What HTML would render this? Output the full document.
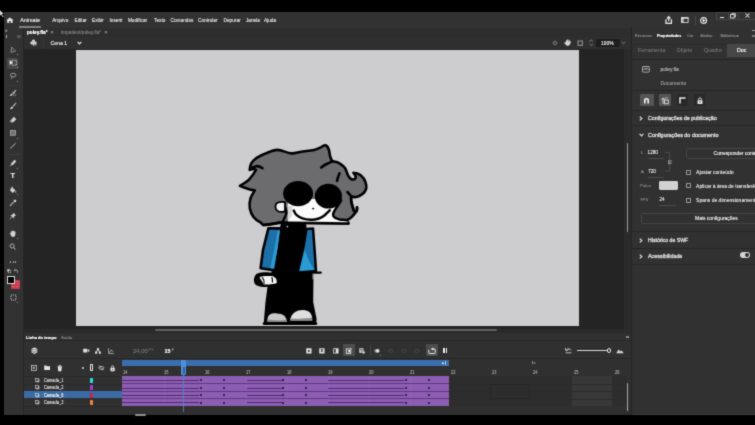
<!DOCTYPE html>
<html><head><meta charset="utf-8"><title>Animate</title>
<style>
html,body{margin:0;padding:0;background:#000;}
body{width:755px;height:425px;position:relative;overflow:hidden;font-family:"Liberation Sans",sans-serif;color:#d0d0d0;}
.a{position:absolute;}
.t{position:absolute;white-space:nowrap;line-height:10px;text-shadow:0 0 .4px currentColor;}
svg{overflow:visible;}
</style></head><body><svg width="0" height="0" style="position:absolute"><defs><filter id="sf" x="0" y="0" width="100%" height="100%" color-interpolation-filters="sRGB"><feConvolveMatrix order="3" kernelMatrix="1 5 1 5 25 5 1 5 1" divisor="49" edgeMode="duplicate" preserveAlpha="true"/></filter></defs></svg><div id="root" style="position:absolute;left:-10px;top:-10px;width:775px;height:445px;will-change:transform;filter:url(#sf);background:#000"><div style="position:absolute;left:10px;top:10px;width:755px;height:425px">
<div class="a" style="left:3.7px;top:12.3px;width:765px;height:403px;background:#323232;"></div>
<div class="a" style="left:3.7px;top:28px;width:628.3px;height:9px;background:#2d2d2d;"></div>
<div class="a" style="left:23px;top:28px;width:35px;height:9px;background:#2f2f2f;"></div>
<div class="a" style="left:23px;top:37px;width:609px;height:12px;background:#2f2f2f;"></div>
<div class="a" style="left:23px;top:49px;width:609px;height:284px;background:#242424;"></div>
<div class="a" style="left:624px;top:49px;width:8px;height:284px;background:#2b2b2b;"></div>
<div class="a" style="left:76px;top:50px;width:503px;height:276px;background:#cdcccf;"></div>
<div class="a" style="left:3.7px;top:28px;width:18.8px;height:387px;background:#323232;"></div>
<div class="a" style="left:22.5px;top:28px;width:1px;height:387px;background:#262626;"></div>
<div class="a" style="left:23px;top:328.8px;width:601px;height:4.2px;background:#2a2a2a;"></div>
<div class="a" style="left:155px;top:328.9px;width:342px;height:1.9px;background:#626262;border-radius:1px;"></div>
<div class="a" style="left:23.5px;top:332.8px;width:608.5px;height:82.2px;background:#303030;"></div>
<div class="a" style="left:23.5px;top:340px;width:608.5px;height:0.8px;background:#262626;"></div>
<div class="a" style="left:632px;top:27px;width:135px;height:388px;background:#313131;"></div>
<div class="a" style="left:631px;top:27px;width:1px;height:388px;background:#242424;"></div>
<svg class="a" style="left:5.9px;top:16.9px;" width="7.8" height="6.2" viewBox="0 0 9 8.6" preserveAspectRatio="none"><path d="M4.5 0.6 L0.3 4.4 H1.4 V8.2 H3.6 V5.6 H5.4 V8.2 H7.6 V4.4 H8.7 Z" fill="#e6e6e6"/></svg>
<svg class="a" style="left:0px;top:9px;" width="6" height="9" viewBox="0 0 6 9" preserveAspectRatio="none"><path d="M-1.6 0 L4.3 4.9 L1.9 5.1 L3.9 7.8 L2.7 8.4 L1 5.8 L-1.6 7.6 Z" fill="#dcdcdc" stroke="#000" stroke-width=".4"/></svg>
<div class="t" style="left:20.2px;top:15px;font-size:5.4px;color:#e0e0e0;">Animate</div>
<div class="a" style="left:19px;top:26.2px;width:21.5px;height:1.6px;background:#808080;"></div>
<div class="t" style="left:52.2px;top:16px;font-size:4.75px;color:#d6d6d6;">Arquivo</div>
<div class="t" style="left:74.5px;top:16px;font-size:4.75px;color:#d6d6d6;">Editar</div>
<div class="t" style="left:92px;top:16px;font-size:4.75px;color:#d6d6d6;">Exibir</div>
<div class="t" style="left:109.5px;top:16px;font-size:4.75px;color:#d6d6d6;">Inserir</div>
<div class="t" style="left:127.9px;top:16px;font-size:4.75px;color:#d6d6d6;">Modificar</div>
<div class="t" style="left:154px;top:16px;font-size:4.75px;color:#d6d6d6;">Texto</div>
<div class="t" style="left:170.5px;top:16px;font-size:4.75px;color:#d6d6d6;">Comandos</div>
<div class="t" style="left:198px;top:16px;font-size:4.75px;color:#d6d6d6;">Controlar</div>
<div class="t" style="left:223.5px;top:16px;font-size:4.75px;color:#d6d6d6;">Depurar</div>
<div class="t" style="left:245.9px;top:16px;font-size:4.75px;color:#d6d6d6;">Janela</div>
<div class="t" style="left:264px;top:16px;font-size:4.75px;color:#d6d6d6;">Ajuda</div>
<svg class="a" style="left:665.3px;top:15.8px;" width="7.4" height="8.4" viewBox="0 0 9 10" preserveAspectRatio="none"><path d="M1.2 3.8 V8.8 H7.8 V3.8" fill="none" stroke="#e8e8e8" stroke-width="1.6"/><path d="M4.5 6.2 V1 M2.4 3 L4.5 0.9 L6.6 3" fill="none" stroke="#e8e8e8" stroke-width="1.5"/></svg>
<svg class="a" style="left:680.6px;top:17.4px;" width="7.6" height="5.9" viewBox="0 0 8 7" preserveAspectRatio="none"><rect x="0.5" y="0.5" width="7" height="6" fill="none" stroke="#ddd" stroke-width="1"/><rect x="0.5" y="0.5" width="7" height="1.6" fill="#ddd"/><rect x="0.5" y="0.5" width="2.6" height="6" fill="#ddd" opacity=".7"/></svg>
<div class="a" style="left:694.5px;top:15.5px;width:0.8px;height:9px;background:#484848;"></div>
<svg class="a" style="left:700.2px;top:16.7px;" width="7.2" height="7.2" viewBox="0 0 8 8" preserveAspectRatio="none"><circle cx="4" cy="4" r="3.3" fill="#2c2c2c" stroke="#f4f4f4" stroke-width="1.2"/><path d="M2.9 2 L6.3 4 L2.9 6 Z" fill="#fff"/></svg>
<div class="a" style="left:716px;top:11.5px;width:40px;height:8px;border:0.8px solid #464646;box-sizing:border-box;background:#323232"></div>
<div class="a" style="left:728px;top:12px;width:0.8px;height:7.5px;background:#464646;"></div>
<div class="a" style="left:737.7px;top:12px;width:0.8px;height:7.5px;background:#464646;"></div>
<div class="a" style="left:719.8px;top:16.7px;width:4.2px;height:1.3px;background:#e8e8e8;"></div>
<svg class="a" style="left:730px;top:13.2px;" width="6" height="6" viewBox="0 0 6 6" preserveAspectRatio="none"><rect x="0.6" y="1.6" width="3.6" height="3.4" fill="none" stroke="#ddd" stroke-width=".9"/><path d="M1.8 1.6 V0.6 H5.4 V4 H4.2" fill="none" stroke="#ddd" stroke-width=".9"/></svg>
<svg class="a" style="left:745px;top:13.3px;" width="5" height="5" viewBox="0 0 5 5" preserveAspectRatio="none"><path d="M0.5 0.5 L4.5 4.5 M4.5 0.5 L0.5 4.5" stroke="#ddd" stroke-width="1.05"/></svg>
<div class="t" style="left:27px;top:28px;font-size:4.7px;color:#f4f4f4;font-weight:bold;">poley.fla*</div>
<div class="t" style="left:50.3px;top:27px;font-size:6px;color:#8a8a8a;">×</div>
<div class="t" style="left:61px;top:28px;font-size:4.8px;color:#787878;">impatient/poley.fla*</div>
<div class="t" style="left:104.2px;top:27px;font-size:6px;color:#8a8a8a;">×</div>
<div class="t" style="left:5px;top:26px;font-size:4.5px;color:#999;">«</div>
<div class="a" style="left:6.2px;top:34.6px;width:1px;height:3px;background:#aaa;"></div>
<div class="a" style="left:16.5px;top:34.6px;width:4.2px;height:3.4px;background:#555;"></div>
<svg class="a" style="left:29.6px;top:39.2px;" width="7" height="7" viewBox="0 0 8 8" preserveAspectRatio="none"><circle cx="4" cy="2.2" r="1.7" fill="#d8d8d8"/><circle cx="2" cy="4.6" r="1.7" fill="#d8d8d8"/><circle cx="6" cy="4.6" r="1.7" fill="#d8d8d8"/><path d="M4 3 L5.2 7.3 H2.8 Z" fill="#d8d8d8"/><circle cx="6.6" cy="6.8" r=".7" fill="#d8d8d8"/></svg>
<div class="a" style="left:42.8px;top:38.5px;width:0.6px;height:9.5px;background:#383838;"></div>
<div class="t" style="left:50.6px;top:38px;font-size:5.1px;color:#e0e0e0;">Cena 1</div>
<svg class="a" style="left:77.3px;top:41.2px;" width="5" height="4" viewBox="0 0 5 4" preserveAspectRatio="none"><path d="M0.6 0.8 L2.5 2.8 L4.4 0.8" fill="none" stroke="#e8e8e8" stroke-width="1.2"/></svg>
<svg class="a" style="left:551.8px;top:39.6px;" width="6" height="6" viewBox="0 0 6 6" preserveAspectRatio="none"><path d="M3 0.3 L5.7 3 L3 5.7 L0.3 3 Z" fill="#777"/><circle cx="3" cy="3" r="1" fill="#303030"/></svg>
<svg class="a" style="left:564px;top:39.4px;" width="7.4" height="7" viewBox="0 0 8 8" preserveAspectRatio="none"><path d="M2.6 7.4 C1.6 6.4 .6 5 .4 4.2 C.2 3.4 1.2 3.2 1.8 4 L2.2 4.6 L2 1.6 C2 .8 3 .8 3.1 1.6 L3.3 3.4 L3.5 .9 C3.6 .1 4.6 .2 4.6 1 L4.6 3.4 L5.2 1.2 C5.4 .5 6.3 .8 6.2 1.5 L5.9 3.8 L6.7 2.6 C7.1 2 7.8 2.4 7.5 3.1 C7 4.4 6.8 5.6 6.2 6.6 C5.8 7.2 5.4 7.4 5 7.6 Z" fill="#d8d8d8"/></svg>
<svg class="a" style="left:577px;top:39.6px;" width="6.4" height="6.4" viewBox="0 0 6.4 6.4" preserveAspectRatio="none"><rect x="0.4" y="0.4" width="5.6" height="5.6" fill="#858585"/><rect x="1.7" y="1.7" width="3" height="3" fill="#2a2a2a"/></svg>
<svg class="a" style="left:589.2px;top:39.2px;" width="4.4" height="7.4" viewBox="0 0 4.4 7.4" preserveAspectRatio="none"><path d="M0.5 2.5 L2.2 0.8 L3.9 2.5 M0.5 4.9 L2.2 6.6 L3.9 4.9" fill="none" stroke="#888" stroke-width=".9"/></svg>
<div class="a" style="left:595.6px;top:39.3px;width:24.3px;height:7.4px;background:#1e1e1e;border-radius:1px;"></div>
<div class="t" style="left:601px;top:39px;font-size:4.9px;color:#e4e4e4;">100%</div>
<svg class="a" style="left:621.2px;top:41.2px;" width="5" height="4" viewBox="0 0 5 4" preserveAspectRatio="none"><path d="M0.7 0.8 L2.5 2.6 L4.3 0.8" fill="none" stroke="#8a8a8a" stroke-width=".9"/></svg>
<svg class="a" style="left:9.085px;top:45.885px;" width="7.83" height="7.83" viewBox="0 0 9 9" preserveAspectRatio="none"><path d="M2.9 1.2 L2.4 7.4 L7.4 5.8 Z" fill="none" stroke="#9c9c9c" stroke-width="1"/></svg>
<div class="a" style="left:17.4px;top:54px;width:1px;height:1px;background:#999;"></div>
<div class="a" style="left:7.2px;top:57.7px;width:11.2px;height:11.5px;background:#484848;border-radius:1px;"></div>
<svg class="a" style="left:8.65px;top:59.385px;" width="8.7" height="7.83" viewBox="0 0 10 9" preserveAspectRatio="none"><rect x="3.4" y="1.6" width="5.4" height="5.4" fill="none" stroke="#d2d2d2" stroke-width=".9" stroke-dasharray="1.2 .7"/><path d="M0.8 1.4 L0.8 6.8 L4.6 4.1 Z" fill="#f4f4f4"/></svg>
<div class="a" style="left:17.4px;top:67.4px;width:1px;height:1px;background:#999;"></div>
<svg class="a" style="left:9.085px;top:72.485px;" width="7.83" height="7.83" viewBox="0 0 9 9" preserveAspectRatio="none"><ellipse cx="4.8" cy="3.6" rx="3.1" ry="2.1" fill="none" stroke="#a8a8a8" stroke-width="1"/><path d="M3.2 5.2 C2.6 6 3.4 6.6 2.6 7.8" fill="none" stroke="#a8a8a8" stroke-width="1"/></svg>
<div class="a" style="left:17.4px;top:80.9px;width:1px;height:1px;background:#999;"></div>
<div class="a" style="left:6.5px;top:84.5px;width:13px;height:0.7px;background:#3c3c3c;"></div>
<svg class="a" style="left:9.085px;top:89.285px;" width="7.83" height="7.83" viewBox="0 0 9 9" preserveAspectRatio="none"><path d="M7.8 0.8 L3.6 5 L4.6 6 L8.4 1.6 Z" fill="#d2d2d2"/><path d="M3.2 5.4 C1.6 5.6 1.8 7.4 0.6 7.8 C2.4 8.4 4.2 7.8 4.2 6.4 Z" fill="#d2d2d2"/><circle cx="6.4" cy="6.6" r="1.4" fill="none" stroke="#999" stroke-width=".7"/></svg>
<svg class="a" style="left:9.085px;top:102.485px;" width="7.83" height="7.83" viewBox="0 0 9 9" preserveAspectRatio="none"><path d="M8 0.6 L4 4.8 L4.9 5.7 L8.5 1.3 Z" fill="#d2d2d2"/><path d="M3.6 5.2 C2 5.4 2.4 7.2 1 8 C2.8 8.6 4.6 7.6 4.6 6.2 Z" fill="#d2d2d2"/></svg>
<svg class="a" style="left:9.085px;top:115.68499999999999px;" width="7.83" height="7.83" viewBox="0 0 9 9" preserveAspectRatio="none"><path d="M5.6 1 L8.4 3.8 L4.6 7.6 H2.6 L1 6 Z" fill="#d2d2d2"/><path d="M1.8 5.2 L3.8 7.2" stroke="#323232" stroke-width=".7"/></svg>
<svg class="a" style="left:9.085px;top:129.285px;" width="7.83" height="7.83" viewBox="0 0 9 9" preserveAspectRatio="none"><rect x="1.6" y="1.6" width="5.8" height="5.6" fill="#727272" stroke="#b4b4b4" stroke-width=".8"/></svg>
<div class="a" style="left:17.1px;top:138px;width:1px;height:1px;background:#888;"></div>
<svg class="a" style="left:9.085px;top:142.485px;" width="7.83" height="7.83" viewBox="0 0 9 9" preserveAspectRatio="none"><path d="M1.4 7.4 L7.6 1.6" stroke="#d2d2d2" stroke-width="1"/></svg>
<div class="a" style="left:6.5px;top:154px;width:13px;height:0.7px;background:#3c3c3c;"></div>
<svg class="a" style="left:9.085px;top:159.38500000000002px;" width="7.83" height="7.83" viewBox="0 0 9 9" preserveAspectRatio="none"><path d="M6.6 0.8 L8.4 2.6 L5 6.6 L2 7.6 L2.8 4.6 Z" fill="#d2d2d2"/><path d="M1 8.2 L2.6 6.8" stroke="#d2d2d2" stroke-width=".8"/></svg>
<div class="a" style="left:17.1px;top:167.6px;width:1px;height:1px;background:#888;"></div>
<div class="t" style="left:10.5px;top:171px;font-size:7.4px;color:#dcdcdc;font-weight:bold;">T</div>
<svg class="a" style="left:9.085px;top:185.88500000000002px;" width="7.83" height="7.83" viewBox="0 0 9 9" preserveAspectRatio="none"><path d="M3.6 1.4 L7.4 4.8 L4.4 8 L1 5 Z" fill="#d2d2d2"/><path d="M2 2.6 L4.6 0.8" stroke="#d2d2d2" stroke-width=".8"/><path d="M7.8 5.4 C8.6 6.6 8.6 7.6 7.8 7.8 C7 7.6 7 6.6 7.8 5.4Z" fill="#d2d2d2"/></svg>
<div class="a" style="left:17.1px;top:194.2px;width:1px;height:1px;background:#888;"></div>
<svg class="a" style="left:9.085px;top:199.285px;" width="7.83" height="7.83" viewBox="0 0 9 9" preserveAspectRatio="none"><path d="M6.4 0.8 C7.4 0.2 8.8 1.6 8.2 2.6 L6.8 4 L5 2.2 Z" fill="#d2d2d2"/><path d="M5.2 3 L1.6 6.6 L1.2 7.8 L2.4 7.4 L6 3.8" fill="none" stroke="#d2d2d2" stroke-width=".8"/></svg>
<svg class="a" style="left:9.085px;top:212.485px;" width="7.83" height="7.83" viewBox="0 0 9 9" preserveAspectRatio="none"><path d="M5 0.8 L8.2 4 L6.8 4.4 L5.6 5.8 L5.4 7.4 L1.6 3.6 L3.2 3.4 L4.6 2.2 Z" fill="#d2d2d2"/><path d="M3.2 5.8 L0.8 8.2" stroke="#d2d2d2" stroke-width=".8"/></svg>
<svg class="a" style="left:9.4px;top:229.6px;" width="7.4" height="7.4" viewBox="0 0 9 9" preserveAspectRatio="none"><path d="M1.4 4.6 C0.8 3 2 2.4 2.8 3.4 L2.8 1.6 C2.8 .6 4 .6 4 1.6 C4 .2 5.4 .2 5.4 1.6 C5.6 .6 6.8 .8 6.8 2 C7.2 1.4 8.2 1.8 8 2.8 L7.6 6 C7.4 7.8 6.4 8.4 4.8 8.4 C3.2 8.4 2.2 7 1.4 4.6Z" fill="#d2d2d2"/></svg>
<div class="a" style="left:17.1px;top:238px;width:1px;height:1px;background:#888;"></div>
<svg class="a" style="left:9.4px;top:243px;" width="7.4" height="7.4" viewBox="0 0 9 9" preserveAspectRatio="none"><circle cx="3.8" cy="3.6" r="2.5" fill="none" stroke="#d2d2d2" stroke-width=".9"/><path d="M5.6 5.6 L8 8" stroke="#d2d2d2" stroke-width="1.1"/></svg>
<div class="a" style="left:10.2px;top:261.4px;width:1.2px;height:1.2px;background:#bbb;border-radius:1px;"></div>
<div class="a" style="left:12.6px;top:261.4px;width:1.2px;height:1.2px;background:#bbb;border-radius:1px;"></div>
<div class="a" style="left:15.0px;top:261.4px;width:1.2px;height:1.2px;background:#bbb;border-radius:1px;"></div>
<svg class="a" style="left:7px;top:269.4px;" width="4.2" height="4.2" viewBox="0 0 5 5" preserveAspectRatio="none"><rect x=".4" y=".4" width="2.8" height="2.8" fill="#ddd"/><rect x="1.8" y="1.8" width="2.8" height="2.8" fill="#222" stroke="#ddd" stroke-width=".5"/></svg>
<svg class="a" style="left:14.4px;top:269.4px;" width="4.2" height="4.2" viewBox="0 0 5 5" preserveAspectRatio="none"><path d="M.6 1.4 H3 C4 1.4 4.2 2.4 4.2 4.4" fill="none" stroke="#ddd" stroke-width=".8"/><path d="M1.6 .2 L.4 1.4 L1.6 2.6" fill="none" stroke="#ddd" stroke-width=".7"/></svg>
<div class="a" style="left:11px;top:280.4px;width:8.5px;height:8.5px;background:#c63a4c;"></div>
<svg class="a" style="left:11px;top:280.4px;" width="8.5" height="8.5" viewBox="0 0 8.5 8.5" preserveAspectRatio="none"><rect x="1.6" y="1.6" width="5.3" height="5.3" fill="none" stroke="#e8909a" stroke-width=".7" stroke-dasharray=".8 .8"/></svg>
<div class="a" style="left:7px;top:276px;width:8px;height:8.2px;background:#000;border:0.9px solid #d8d8d8;box-sizing:border-box"></div>
<svg class="a" style="left:9.6px;top:294px;" width="7" height="7" viewBox="0 0 7 7" preserveAspectRatio="none"><rect x="1" y="1" width="5" height="5" fill="none" stroke="#ccc" stroke-width=".9" stroke-dasharray="1.1 .9"/></svg>
<div class="a" style="left:17.1px;top:302px;width:1px;height:1px;background:#888;"></div>
<div class="t" style="left:26px;top:333px;font-size:4.1px;color:#f4f4f4;font-weight:bold;">Linha do tempo</div>
<div class="t" style="left:61px;top:333px;font-size:4.3px;color:#808080;">Saída</div>
<div class="a" style="left:625.5px;top:335.6px;width:3.4px;height:2.6px;background:#8a8a8a;"></div>
<svg class="a" style="left:31.4px;top:347px;" width="6.8" height="7.6" viewBox="0 0 8 9" preserveAspectRatio="none"><path d="M4 .6 L7.4 2 L4 3.4 L.6 2 Z" fill="#e6e6e6"/><path d="M.6 2.4 V6.6 L4 8.2 L7.4 6.6 V2.4 L4 3.9Z" fill="#e6e6e6"/><path d="M.6 4 L4 5.5 L7.4 4 M.6 5.4 L4 6.9 L7.4 5.4" fill="none" stroke="#303030" stroke-width=".5"/></svg>
<svg class="a" style="left:83px;top:348px;" width="6.6" height="5.2" viewBox="0 0 8 6" preserveAspectRatio="none"><rect x=".2" y=".8" width="5" height="4.4" rx=".6" fill="#dedede"/><path d="M5.2 3 L7.6 1.2 V4.8 Z" fill="#dedede"/></svg>
<svg class="a" style="left:95.2px;top:347.6px;" width="6" height="6" viewBox="0 0 8 7.5" preserveAspectRatio="none"><rect x="2.6" y=".2" width="2.8" height="2.6" fill="#dedede"/><rect x=".1" y="4.6" width="2.8" height="2.6" fill="#dedede"/><rect x="5.1" y="4.6" width="2.8" height="2.6" fill="#dedede"/><path d="M3.9 2.4 V3.7 M1.4 4.8 V3.7 H6.4 V4.8" fill="none" stroke="#dedede" stroke-width=".9"/></svg>
<svg class="a" style="left:108px;top:347.6px;" width="6.2" height="6" viewBox="0 0 8 7.5" preserveAspectRatio="none"><path d="M.8 .4 V6.8 H7.4" fill="none" stroke="#e6e6e6" stroke-width=".8"/><path d="M2 5.4 C3 5 3.6 2.4 4.6 2.8 C5.4 3.2 5.6 4.4 6.8 4.2" fill="none" stroke="#e6e6e6" stroke-width=".9"/></svg>
<div class="t" style="left:133px;top:346px;font-size:5.9px;color:#6e6e6e;">24,00</div>
<div class="t" style="left:148.4px;top:346px;font-size:2.6px;color:#5c5c5c;">FPS</div>
<div class="t" style="left:164.6px;top:346px;font-size:5.4px;color:#f0f0f0;font-weight:bold;">15</div>
<div class="t" style="left:172px;top:346px;font-size:2.6px;color:#aaa;">F</div>
<svg class="a" style="left:305.8px;top:347.7px;" width="5.8" height="5.8" viewBox="0 0 6.4 6.4" preserveAspectRatio="none"><rect x=".3" y=".3" width="5.8" height="5.8" fill="#e2e2e2"/><circle cx="3.2" cy="3.2" r="1.1" fill="#303030"/></svg>
<svg class="a" style="left:319.1px;top:347.7px;" width="5.8" height="5.8" viewBox="0 0 6.4 6.4" preserveAspectRatio="none"><rect x=".3" y=".3" width="5.8" height="5.8" fill="#e2e2e2"/><circle cx="3.2" cy="3.4" r="1.1" fill="#303030"/><rect x="2" y="1" width="2.4" height=".8" fill="#303030"/></svg>
<svg class="a" style="left:332.6px;top:347.7px;" width="5.8" height="5.8" viewBox="0 0 6.4 6.4" preserveAspectRatio="none"><rect x=".3" y=".3" width="5.8" height="5.8" fill="#e2e2e2"/><rect x="1.2" y="1.2" width="1.8" height="4" fill="#303030"/></svg>
<div class="a" style="left:343px;top:344px;width:11.7px;height:12px;background:#4c4c4c;border-radius:1px;"></div>
<svg class="a" style="left:345.90000000000003px;top:347.7px;" width="5.8" height="5.8" viewBox="0 0 6.4 6.4" preserveAspectRatio="none"><rect x=".3" y="1" width="5" height="5" fill="none" stroke="#eee" stroke-width=".9"/><rect x="2.4" y="2.2" width="2" height="2.6" fill="#eee"/><path d="M5.2 .2 L6.6 1.4" stroke="#eee" stroke-width=".7"/></svg>
<svg class="a" style="left:359.1px;top:347.7px;" width="5.8" height="5.8" viewBox="0 0 6.4 6.4" preserveAspectRatio="none"><rect x=".3" y=".3" width="4.6" height="5" fill="#dcdcdc"/><path d="M1 1.6 H4 M1 3 H4" stroke="#303030" stroke-width=".6"/><circle cx="5" cy="4.8" r="1.7" fill="#dcdcdc" stroke="#303030" stroke-width=".5"/></svg>
<div class="a" style="left:369.6px;top:345px;width:0.7px;height:11px;background:#444;"></div>
<svg class="a" style="left:374.1px;top:347.7px;" width="5.8" height="5.8" viewBox="0 0 6.4 6.4" preserveAspectRatio="none"><circle cx="2.3" cy="3.2" r="2" fill="#8c8c8c"/><circle cx="4.1" cy="3.2" r="2" fill="#e0e0e0"/></svg>
<div class="a" style="left:380.2px;top:354.6px;width:1px;height:1px;background:#888;"></div>
<svg class="a" style="left:387.8px;top:347.7px;" width="5.8" height="5.8" viewBox="0 0 6.4 6.4" preserveAspectRatio="none"><ellipse cx="3.2" cy="3.2" rx="2.6" ry="1.7" fill="none" stroke="#4a4a4a" stroke-width=".9"/></svg>
<svg class="a" style="left:401.1px;top:347.7px;" width="5.8" height="5.8" viewBox="0 0 6.4 6.4" preserveAspectRatio="none"><ellipse cx="3.2" cy="3.2" rx="2.6" ry="1.7" fill="none" stroke="#4a4a4a" stroke-width=".9"/></svg>
<svg class="a" style="left:414.1px;top:347.7px;" width="5.8" height="5.8" viewBox="0 0 6.4 6.4" preserveAspectRatio="none"><ellipse cx="3.2" cy="3.2" rx="2.6" ry="1.7" fill="none" stroke="#4a4a4a" stroke-width=".9"/></svg>
<div class="a" style="left:425.6px;top:344px;width:12.4px;height:12px;background:#4c4c4c;border-radius:1px;"></div>
<svg class="a" style="left:427.8px;top:347px;" width="8" height="7.4" viewBox="0 0 8 7.4" preserveAspectRatio="none"><path d="M.8 3 V5.8 C.8 6.4 1.2 6.6 1.6 6.6 H6.4 C6.8 6.6 7.2 6.4 7.2 5.8 V2.8 C7.2 2.2 6.8 2 6.4 2 H3" fill="none" stroke="#f0f0f0" stroke-width="1"/><path d="M4.4 .4 L6.2 2 L4.4 3.6" fill="#f0f0f0"/></svg>
<div class="a" style="left:443.4px;top:348px;width:1.3px;height:5.2px;background:#f0f0f0;"></div>
<div class="a" style="left:445.9px;top:348px;width:1.3px;height:5.2px;background:#f0f0f0;"></div>
<svg class="a" style="left:564.5px;top:347.4px;" width="7" height="6.4" viewBox="0 0 7 6.4" preserveAspectRatio="none"><path d="M1.2 3.2 C2.4 1.4 5 1.4 6 3.4" fill="none" stroke="#e0e0e0" stroke-width=".9"/><path d="M.4 1 L.9 3.6 L3.4 3" fill="none" stroke="#e0e0e0" stroke-width=".8"/><path d="M.6 5.8 H6.4" stroke="#e0e0e0" stroke-width=".8"/></svg>
<div class="a" style="left:576.6px;top:350.2px;width:30px;height:0.8px;background:#d8d8d8;"></div>
<div class="a" style="left:606.6px;top:348.2px;width:4.6px;height:4.6px;border:0.9px solid #e8e8e8;border-radius:50%;box-sizing:border-box;background:#303030"></div>
<svg class="a" style="left:616px;top:348px;" width="8" height="5.4" viewBox="0 0 8 5.4" preserveAspectRatio="none"><path d="M.2 5.2 L2.6 1.4 L4.2 3.6 L5.4 2.2 L7.8 5.2 Z" fill="#d8d8d8"/></svg>
<div class="a" style="left:23.5px;top:358.3px;width:608.5px;height:0.7px;background:#272727;"></div>
<svg class="a" style="left:31.4px;top:365px;" width="5.8" height="5.8" viewBox="0 0 7 7" preserveAspectRatio="none"><rect x=".5" y=".5" width="6" height="6" fill="none" stroke="#e6e6e6" stroke-width=".8"/><path d="M3.5 2 V5 M2 3.5 H5" stroke="#e6e6e6" stroke-width=".9"/></svg>
<svg class="a" style="left:43.9px;top:365.2px;" width="6.4" height="5.4" viewBox="0 0 8 6.4" preserveAspectRatio="none"><path d="M.3 .6 H3 L3.8 1.6 H7.5 V6 H.3 Z" fill="#e6e6e6"/></svg>
<svg class="a" style="left:56.8px;top:364.6px;" width="5.6" height="6.6" viewBox="0 0 6.4 7.4" preserveAspectRatio="none"><path d="M.4 1.6 H6 M2.2 1.4 V.5 H4.2 V1.4" fill="none" stroke="#e6e6e6" stroke-width=".8"/><path d="M1 2.2 H5.4 L5 7 H1.4 Z" fill="#e6e6e6"/></svg>
<div class="a" style="left:82.4px;top:367px;width:1.7px;height:1.7px;background:#ddd;border-radius:1px;"></div>
<div class="a" style="left:89.8px;top:364.2px;width:3.4px;height:7.2px;border:0.9px solid #e6e6e6;border-radius:.8px;box-sizing:border-box"></div>
<svg class="a" style="left:98.2px;top:365px;" width="6.6" height="5.8" viewBox="0 0 8 6.6" preserveAspectRatio="none"><path d="M.6 3.3 C2 1 6 1 7.4 3.3 C6 5.6 2 5.6 .6 3.3Z" fill="none" stroke="#e6e6e6" stroke-width=".8"/><path d="M1.2 .6 L6.8 6" stroke="#e6e6e6" stroke-width=".9"/></svg>
<svg class="a" style="left:109.5px;top:364.6px;" width="5.2" height="6.6" viewBox="0 0 6.4 7.4" preserveAspectRatio="none"><rect x=".6" y="3.2" width="5.2" height="3.8" rx=".5" fill="#e6e6e6"/><path d="M1.8 3.2 V2.2 C1.8 .4 4.6 .4 4.6 2.2 V3.2" fill="none" stroke="#e6e6e6" stroke-width=".9"/><rect x="2.8" y="4.4" width=".9" height="1.4" fill="#303030"/></svg>
<div class="a" style="left:23.5px;top:375.8px;width:98.5px;height:0.6px;background:#2a2a2a;"></div>
<div class="a" style="left:23.5px;top:383.6px;width:98.5px;height:0.5px;background:#2a2a2a;"></div>
<svg class="a" style="left:35.3px;top:377.8px;" width="4.4" height="4.4" viewBox="0 0 6 5.4" preserveAspectRatio="none"><rect x=".4" y=".4" width="4" height="3.4" fill="none" stroke="#e6e6e6" stroke-width=".7"/><path d="M1.6 3.8 V4.8 H5.4 V1.6 H4.4" fill="none" stroke="#e6e6e6" stroke-width=".9"/></svg>
<div class="t" style="left:44px;top:376px;font-size:4.6px;color:#d2d2d2;transform:scaleX(.86);transform-origin:0 0;">Camada_1</div>
<div class="a" style="left:90.4px;top:377.5px;width:2.7px;height:5px;background:#27e0e0;border-radius:.5px;"></div>
<div class="a" style="left:23.5px;top:391.1px;width:98.5px;height:0.5px;background:#2a2a2a;"></div>
<svg class="a" style="left:35.3px;top:385.3px;" width="4.4" height="4.4" viewBox="0 0 6 5.4" preserveAspectRatio="none"><rect x=".4" y=".4" width="4" height="3.4" fill="none" stroke="#e6e6e6" stroke-width=".7"/><path d="M1.6 3.8 V4.8 H5.4 V1.6 H4.4" fill="none" stroke="#e6e6e6" stroke-width=".9"/></svg>
<div class="t" style="left:44px;top:383px;font-size:4.6px;color:#d2d2d2;transform:scaleX(.86);transform-origin:0 0;">Camada_2</div>
<div class="a" style="left:90.4px;top:385.0px;width:2.7px;height:5px;background:#a23cc8;border-radius:.5px;"></div>
<div class="a" style="left:23.8px;top:391.3px;width:98.2px;height:6.9px;background:#3b6ba5;"></div>
<svg class="a" style="left:35.3px;top:392.8px;" width="4.4" height="4.4" viewBox="0 0 6 5.4" preserveAspectRatio="none"><rect x=".4" y=".4" width="4" height="3.4" fill="none" stroke="#e6e6e6" stroke-width=".7"/><path d="M1.6 3.8 V4.8 H5.4 V1.6 H4.4" fill="none" stroke="#e6e6e6" stroke-width=".9"/></svg>
<div class="t" style="left:44px;top:391px;font-size:4.6px;color:#ececec;transform:scaleX(.86);transform-origin:0 0;">Camada_6</div>
<div class="a" style="left:90.4px;top:392.5px;width:2.7px;height:5px;background:#c8283c;border-radius:.5px;"></div>
<div class="a" style="left:23.5px;top:406.1px;width:98.5px;height:0.5px;background:#2a2a2a;"></div>
<svg class="a" style="left:35.3px;top:400.3px;" width="4.4" height="4.4" viewBox="0 0 6 5.4" preserveAspectRatio="none"><rect x=".4" y=".4" width="4" height="3.4" fill="none" stroke="#e6e6e6" stroke-width=".7"/><path d="M1.6 3.8 V4.8 H5.4 V1.6 H4.4" fill="none" stroke="#e6e6e6" stroke-width=".9"/></svg>
<div class="t" style="left:44px;top:398px;font-size:4.6px;color:#d2d2d2;transform:scaleX(.86);transform-origin:0 0;">Camada_3</div>
<div class="a" style="left:90.4px;top:400.0px;width:2.7px;height:5px;background:#f0843c;border-radius:.5px;"></div>
<div class="a" style="left:122.2px;top:360.2px;width:327px;height:5.6px;background:#3a6eae;"></div>
<div class="t" style="left:441.6px;top:359px;font-size:2.6px;color:#b8cce8;">▶</div>
<div class="a" style="left:445.2px;top:361.2px;width:0.7px;height:3.4px;background:#b8cce8;"></div>
<div class="t" style="left:531.4px;top:358px;font-size:3.8px;color:#9a9a9a;">1s</div>
<div class="t" style="left:122.8px;top:368px;font-size:4.6px;color:#9a9a9a;transform:scaleX(.86);transform-origin:0 0;">14</div>
<div class="t" style="left:163.8px;top:368px;font-size:4.6px;color:#9a9a9a;transform:scaleX(.86);transform-origin:0 0;">15</div>
<div class="t" style="left:204.8px;top:368px;font-size:4.6px;color:#9a9a9a;transform:scaleX(.86);transform-origin:0 0;">16</div>
<div class="t" style="left:245.8px;top:368px;font-size:4.6px;color:#9a9a9a;transform:scaleX(.86);transform-origin:0 0;">17</div>
<div class="t" style="left:286.8px;top:368px;font-size:4.6px;color:#9a9a9a;transform:scaleX(.86);transform-origin:0 0;">18</div>
<div class="t" style="left:327.8px;top:368px;font-size:4.6px;color:#9a9a9a;transform:scaleX(.86);transform-origin:0 0;">19</div>
<div class="t" style="left:368.8px;top:368px;font-size:4.6px;color:#9a9a9a;transform:scaleX(.86);transform-origin:0 0;">20</div>
<div class="t" style="left:409.8px;top:368px;font-size:4.6px;color:#9a9a9a;transform:scaleX(.86);transform-origin:0 0;">21</div>
<div class="t" style="left:450.8px;top:368px;font-size:4.6px;color:#9a9a9a;transform:scaleX(.86);transform-origin:0 0;">22</div>
<div class="t" style="left:491.8px;top:368px;font-size:4.6px;color:#9a9a9a;transform:scaleX(.86);transform-origin:0 0;">23</div>
<div class="t" style="left:532.8px;top:368px;font-size:4.6px;color:#9a9a9a;transform:scaleX(.86);transform-origin:0 0;">24</div>
<div class="t" style="left:573.8px;top:368px;font-size:4.6px;color:#9a9a9a;transform:scaleX(.86);transform-origin:0 0;">25</div>
<div class="t" style="left:614.8px;top:368px;font-size:4.6px;color:#9a9a9a;transform:scaleX(.86);transform-origin:0 0;">26</div>
<div class="a" style="left:449px;top:376.3px;width:178px;height:29.6px;background:#2d2d2d;"></div>
<div class="a" style="left:572px;top:376.3px;width:40px;height:29.6px;background:#383838;"></div>
<div class="a" style="left:449px;top:383.6px;width:178px;height:0.5px;background:#2b2b2b;"></div>
<div class="a" style="left:449px;top:391.1px;width:178px;height:0.5px;background:#2b2b2b;"></div>
<div class="a" style="left:449px;top:398.6px;width:178px;height:0.5px;background:#2b2b2b;"></div>
<div class="a" style="left:490px;top:383.6px;width:40px;height:15px;border:0.5px solid #262626;box-sizing:border-box"></div>
<div class="a" style="left:122.2px;top:376.4px;width:326.8px;height:29.5px;background:#8c5db2;"></div>
<div class="a" style="left:122.2px;top:380.1px;width:77.3px;height:0.65px;background:#4e2d72;"></div>
<div class="a" style="left:246.5px;top:380.1px;width:35.0px;height:0.65px;background:#4e2d72;"></div>
<div class="a" style="left:328px;top:380.1px;width:76px;height:0.65px;background:#4e2d72;"></div>
<div class="a" style="left:200.20000000000002px;top:379.3px;width:2.2px;height:2.2px;background:#1c0f2c;border-radius:50%;"></div>
<div class="a" style="left:223.3px;top:379.3px;width:2.2px;height:2.2px;background:#1c0f2c;border-radius:50%;"></div>
<div class="a" style="left:281.9px;top:379.3px;width:2.2px;height:2.2px;background:#1c0f2c;border-radius:50%;"></div>
<div class="a" style="left:305.09999999999997px;top:379.3px;width:2.2px;height:2.2px;background:#1c0f2c;border-radius:50%;"></div>
<div class="a" style="left:404.59999999999997px;top:379.3px;width:2.2px;height:2.2px;background:#1c0f2c;border-radius:50%;"></div>
<div class="a" style="left:427.79999999999995px;top:379.3px;width:2.2px;height:2.2px;background:#1c0f2c;border-radius:50%;"></div>
<div class="a" style="left:122.2px;top:383.4px;width:326.8px;height:0.9px;background:#5e3a80;"></div>
<div class="a" style="left:122.2px;top:387.5px;width:77.3px;height:0.65px;background:#4e2d72;"></div>
<div class="a" style="left:246.5px;top:387.5px;width:35.0px;height:0.65px;background:#4e2d72;"></div>
<div class="a" style="left:328px;top:387.5px;width:76px;height:0.65px;background:#4e2d72;"></div>
<div class="a" style="left:200.20000000000002px;top:386.7px;width:2.2px;height:2.2px;background:#1c0f2c;border-radius:50%;"></div>
<div class="a" style="left:223.3px;top:386.7px;width:2.2px;height:2.2px;background:#1c0f2c;border-radius:50%;"></div>
<div class="a" style="left:281.9px;top:386.7px;width:2.2px;height:2.2px;background:#1c0f2c;border-radius:50%;"></div>
<div class="a" style="left:305.09999999999997px;top:386.7px;width:2.2px;height:2.2px;background:#1c0f2c;border-radius:50%;"></div>
<div class="a" style="left:404.59999999999997px;top:386.7px;width:2.2px;height:2.2px;background:#1c0f2c;border-radius:50%;"></div>
<div class="a" style="left:427.79999999999995px;top:386.7px;width:2.2px;height:2.2px;background:#1c0f2c;border-radius:50%;"></div>
<div class="a" style="left:122.2px;top:390.8px;width:326.8px;height:0.9px;background:#5e3a80;"></div>
<div class="a" style="left:122.2px;top:394.90000000000003px;width:77.3px;height:0.65px;background:#4e2d72;"></div>
<div class="a" style="left:246.5px;top:394.90000000000003px;width:35.0px;height:0.65px;background:#4e2d72;"></div>
<div class="a" style="left:328px;top:394.90000000000003px;width:76px;height:0.65px;background:#4e2d72;"></div>
<div class="a" style="left:200.20000000000002px;top:394.1px;width:2.2px;height:2.2px;background:#1c0f2c;border-radius:50%;"></div>
<div class="a" style="left:223.3px;top:394.1px;width:2.2px;height:2.2px;background:#1c0f2c;border-radius:50%;"></div>
<div class="a" style="left:281.9px;top:394.1px;width:2.2px;height:2.2px;background:#1c0f2c;border-radius:50%;"></div>
<div class="a" style="left:305.09999999999997px;top:394.1px;width:2.2px;height:2.2px;background:#1c0f2c;border-radius:50%;"></div>
<div class="a" style="left:404.59999999999997px;top:394.1px;width:2.2px;height:2.2px;background:#1c0f2c;border-radius:50%;"></div>
<div class="a" style="left:427.79999999999995px;top:394.1px;width:2.2px;height:2.2px;background:#1c0f2c;border-radius:50%;"></div>
<div class="a" style="left:122.2px;top:398.2px;width:326.8px;height:0.9px;background:#5e3a80;"></div>
<div class="a" style="left:122.2px;top:402.3px;width:77.3px;height:0.65px;background:#4e2d72;"></div>
<div class="a" style="left:246.5px;top:402.3px;width:35.0px;height:0.65px;background:#4e2d72;"></div>
<div class="a" style="left:328px;top:402.3px;width:76px;height:0.65px;background:#4e2d72;"></div>
<div class="a" style="left:200.20000000000002px;top:401.5px;width:2.2px;height:2.2px;background:#1c0f2c;border-radius:50%;"></div>
<div class="a" style="left:223.3px;top:401.5px;width:2.2px;height:2.2px;background:#1c0f2c;border-radius:50%;"></div>
<div class="a" style="left:281.9px;top:401.5px;width:2.2px;height:2.2px;background:#1c0f2c;border-radius:50%;"></div>
<div class="a" style="left:305.09999999999997px;top:401.5px;width:2.2px;height:2.2px;background:#1c0f2c;border-radius:50%;"></div>
<div class="a" style="left:404.59999999999997px;top:401.5px;width:2.2px;height:2.2px;background:#1c0f2c;border-radius:50%;"></div>
<div class="a" style="left:427.79999999999995px;top:401.5px;width:2.2px;height:2.2px;background:#1c0f2c;border-radius:50%;"></div>
<div class="a" style="left:163.7px;top:376.4px;width:0.6px;height:29.5px;background:rgba(170,130,205,.14);"></div>
<div class="a" style="left:204.7px;top:376.4px;width:0.6px;height:29.5px;background:rgba(170,130,205,.14);"></div>
<div class="a" style="left:245.7px;top:376.4px;width:0.6px;height:29.5px;background:rgba(170,130,205,.14);"></div>
<div class="a" style="left:286.7px;top:376.4px;width:0.6px;height:29.5px;background:rgba(170,130,205,.14);"></div>
<div class="a" style="left:327.7px;top:376.4px;width:0.6px;height:29.5px;background:rgba(170,130,205,.14);"></div>
<div class="a" style="left:368.7px;top:376.4px;width:0.6px;height:29.5px;background:rgba(170,130,205,.14);"></div>
<div class="a" style="left:409.7px;top:376.4px;width:0.6px;height:29.5px;background:rgba(170,130,205,.14);"></div>
<div class="a" style="left:181.1px;top:360.2px;width:5.4px;height:14.8px;background:#4e8fdc;border-radius:1px;"></div>
<div class="a" style="left:182.6px;top:366.5px;width:2.4px;height:7.4px;background:#32639f;"></div>
<div class="a" style="left:183.4px;top:375px;width:0.9px;height:36.5px;background:rgba(74,138,216,.8);"></div>
<div class="a" style="left:135px;top:413.7px;width:11.4px;height:1.9px;background:#909090;border-radius:1px;"></div>
<div class="a" style="left:626.6px;top:383px;width:1.3px;height:28.4px;background:#a8a8a8;border-radius:1px;"></div>
<div class="a" style="left:632px;top:414.4px;width:140px;height:1px;background:#3e3e3e;"></div>
<div class="t" style="left:634.8px;top:31px;font-size:4.0px;color:#868686;">Recursos</div>
<div class="t" style="left:657px;top:31px;font-size:3.8px;color:#f4f4f4;font-weight:bold;">Propriedades</div>
<div class="t" style="left:687.2px;top:31px;font-size:4.0px;color:#868686;">Cor</div>
<div class="t" style="left:700.2px;top:31px;font-size:4.0px;color:#868686;">Alinhar</div>
<div class="t" style="left:720.5px;top:31px;font-size:4.0px;color:#868686;">Biblioteca</div>
<div class="a" style="left:752.2px;top:30.2px;width:6px;height:1.1px;background:#9a9a9a;"></div>
<div class="a" style="left:752.2px;top:34.9px;width:6px;height:2.6px;background:#7c7c7c;"></div>
<div class="t" style="left:737.4px;top:31px;font-size:3.6px;color:#868686;">▸</div>
<div class="a" style="left:632px;top:43.5px;width:135px;height:0.6px;background:#2a2a2a;"></div>
<div class="a" style="left:727.4px;top:44px;width:40px;height:12.6px;background:#474747;"></div>
<div class="t" style="left:638px;top:45px;font-size:5.3px;color:#6a6a6a;">Ferramenta</div>
<div class="t" style="left:676.6px;top:45px;font-size:5.3px;color:#6a6a6a;">Objeto</div>
<div class="t" style="left:704px;top:45px;font-size:5.3px;color:#6a6a6a;">Quadro</div>
<div class="t" style="left:737px;top:45px;font-size:5.3px;color:#f0f0f0;">Doc</div>
<div class="a" style="left:632px;top:58.6px;width:135px;height:0.8px;background:#262626;"></div>
<svg class="a" style="left:642.4px;top:65.8px;" width="8" height="7" viewBox="0 0 8 7" preserveAspectRatio="none"><rect x=".5" y=".5" width="6.8" height="5.6" rx=".6" fill="none" stroke="#c8c8c8" stroke-width=".8"/><path d="M1.2 3.4 H6.6" stroke="#c8c8c8" stroke-width=".7" stroke-dasharray="1 .5"/><path d="M2 3 L3 1.8 L4 3 M4 3 L5 1.8 L6 3" fill="none" stroke="#c8c8c8" stroke-width=".6"/></svg>
<div class="t" style="left:660.6px;top:64px;font-size:5.0px;color:#ababab;">poley.fla</div>
<div class="t" style="left:660.6px;top:78px;font-size:5.0px;color:#8e8e8e;">Documento</div>
<div class="a" style="left:632px;top:90px;width:135px;height:0.8px;background:#262626;"></div>
<div class="a" style="left:640.1px;top:94.2px;width:13.6px;height:12.1px;background:#555;border-radius:1.2px;"></div>
<svg class="a" style="left:643.4px;top:96.6px;" width="7" height="7.4" viewBox="0 0 7 7.4" preserveAspectRatio="none"><path d="M1 6.6 V3.4 C1 .2 6 .2 6 3.4 V6.6 H4.4 V3.4 C4.4 2.2 2.6 2.2 2.6 3.4 V6.6 Z" fill="#f4f4f4"/></svg>
<div class="a" style="left:658.9px;top:94.2px;width:12.2px;height:12.1px;background:#555;border-radius:1.2px;"></div>
<svg class="a" style="left:661.4px;top:96.6px;" width="8" height="7.6" viewBox="0 0 8 7.6" preserveAspectRatio="none"><path d="M2 7 V1.6 M.6 2.8 L2 1 L3.4 2.8" fill="none" stroke="#eee" stroke-width=".8"/><rect x="3.4" y="3" width="3.8" height="3.8" fill="none" stroke="#eee" stroke-width=".8"/><path d="M3.4 1 H7" stroke="#eee" stroke-width=".6"/></svg>
<div class="a" style="left:676.6px;top:94.2px;width:11.6px;height:12.1px;background:#292929;border-radius:1.2px;"></div>
<svg class="a" style="left:679px;top:96.8px;" width="7" height="7" viewBox="0 0 7 7" preserveAspectRatio="none"><path d="M1 6.6 V1 H6.6" fill="none" stroke="#e8e8e8" stroke-width="1.5"/></svg>
<div class="a" style="left:693.8px;top:94.2px;width:11.2px;height:12.1px;background:#292929;border-radius:1.2px;"></div>
<svg class="a" style="left:696.6px;top:96.6px;" width="6" height="7.4" viewBox="0 0 6 7.4" preserveAspectRatio="none"><rect x=".5" y="3.2" width="5" height="3.8" rx=".5" fill="#e8e8e8"/><path d="M1.6 3.2 V2.2 C1.6 .4 4.4 .4 4.4 2.2 V3.2" fill="none" stroke="#e8e8e8" stroke-width=".9"/><rect x="2.6" y="4.4" width=".9" height="1.4" fill="#272727"/></svg>
<div class="a" style="left:632px;top:109.8px;width:135px;height:0.8px;background:#262626;"></div>
<svg class="a" style="left:639.1999999999999px;top:115.89999999999999px;" width="4" height="5" viewBox="0 0 4 5" preserveAspectRatio="none"><path d="M.8 .6 L2.8 2.5 L.8 4.4" fill="none" stroke="#e0e0e0" stroke-width="1.2"/></svg>
<div class="t" style="left:648px;top:113px;font-size:5.33px;color:#cfcfcf;-webkit-text-stroke:.28px #cfcfcf;">Configurações de publicação</div>
<div class="a" style="left:632px;top:125.4px;width:135px;height:0.8px;background:#262626;"></div>
<svg class="a" style="left:639.0px;top:133.1px;" width="5" height="4" viewBox="0 0 5 4" preserveAspectRatio="none"><path d="M.6 .8 L2.5 2.8 L4.4 .8" fill="none" stroke="#e0e0e0" stroke-width="1.2"/></svg>
<div class="t" style="left:648px;top:130px;font-size:5.42px;color:#cfcfcf;-webkit-text-stroke:.28px #cfcfcf;">Configurações do documento</div>
<div class="t" style="left:641px;top:148px;font-size:4.2px;color:#8a8a8a;">L</div>
<div class="t" style="left:647.6px;top:148px;font-size:4.6px;color:#dcdcdc;">1280</div>
<div class="a" style="left:648px;top:158px;width:16px;height:0.6px;background:#4a4a4a;"></div>
<div class="t" style="left:641px;top:167px;font-size:4.2px;color:#8a8a8a;">A</div>
<div class="t" style="left:648.2px;top:167px;font-size:4.6px;color:#dcdcdc;">720</div>
<div class="a" style="left:648px;top:177.2px;width:16px;height:0.6px;background:#4a4a4a;"></div>
<svg class="a" style="left:665px;top:152px;" width="7" height="20" viewBox="0 0 7 20" preserveAspectRatio="none"><path d="M0 .5 H4.6 V8 M4.6 12.6 V19 H0" fill="none" stroke="#5a5a5a" stroke-width=".6"/><rect x="3.4" y="8.8" width="2.6" height="3" fill="none" stroke="#bbb" stroke-width=".6"/><path d="M4.7 8.8 V11.8" stroke="#bbb" stroke-width=".5"/></svg>
<div class="a" style="left:686.1px;top:147.6px;width:80px;height:11.2px;border:0.7px solid #454545;border-radius:1.4px;box-sizing:border-box"></div>
<div class="t" style="left:713.6px;top:149px;font-size:4.9px;color:#e4e4e4;">Corresponder conteúdo</div>
<div class="t" style="left:640.1px;top:181px;font-size:4.3px;color:#7c7c7c;">Palco</div>
<div class="a" style="left:659.4px;top:181px;width:18.6px;height:8.6px;background:#d2d2d2;border-radius:1.4px;"></div>
<div class="t" style="left:640.4px;top:195px;font-size:4.0px;color:#7c7c7c;">FPS</div>
<div class="t" style="left:659.4px;top:195px;font-size:4.6px;color:#dcdcdc;">24</div>
<div class="a" style="left:659px;top:205px;width:17px;height:0.6px;background:#4a4a4a;"></div>
<div class="a" style="left:686.4px;top:169.5px;width:5px;height:5px;border:0.7px solid #9a9a9a;border-radius:.8px;box-sizing:border-box"></div>
<div class="t" style="left:696.1px;top:167px;font-size:5.0px;color:#d8d8d8;">Ajustar conteúdo</div>
<div class="a" style="left:686.4px;top:183.3px;width:5px;height:5px;border:0.7px solid #9a9a9a;border-radius:.8px;box-sizing:border-box"></div>
<div class="t" style="left:696.1px;top:181px;font-size:5.0px;color:#d8d8d8;">Aplicar à área de transferência</div>
<div class="a" style="left:686.4px;top:197.5px;width:5px;height:5px;border:0.7px solid #9a9a9a;border-radius:.8px;box-sizing:border-box"></div>
<div class="t" style="left:696.1px;top:195px;font-size:5.0px;color:#d8d8d8;">Spans de dimensionamento</div>
<div class="a" style="left:640.8px;top:212.7px;width:130px;height:11.2px;border:0.7px solid #454545;border-radius:1.4px;box-sizing:border-box"></div>
<div class="t" style="left:695px;top:213px;font-size:4.98px;color:#e0e0e0;">Mais configurações</div>
<div class="a" style="left:632px;top:231.4px;width:135px;height:0.8px;background:#262626;"></div>
<svg class="a" style="left:639.1999999999999px;top:237.6px;" width="4" height="5" viewBox="0 0 4 5" preserveAspectRatio="none"><path d="M.8 .6 L2.8 2.5 L.8 4.4" fill="none" stroke="#e0e0e0" stroke-width="1.2"/></svg>
<div class="t" style="left:648px;top:235px;font-size:5.18px;color:#cfcfcf;-webkit-text-stroke:.28px #cfcfcf;">Histórico de SWF</div>
<div class="a" style="left:632px;top:247.5px;width:135px;height:0.8px;background:#262626;"></div>
<svg class="a" style="left:639.1999999999999px;top:253.9px;" width="4" height="5" viewBox="0 0 4 5" preserveAspectRatio="none"><path d="M.8 .6 L2.8 2.5 L.8 4.4" fill="none" stroke="#e0e0e0" stroke-width="1.2"/></svg>
<div class="t" style="left:648px;top:251px;font-size:5.38px;color:#cfcfcf;-webkit-text-stroke:.28px #cfcfcf;">Acessibilidade</div>
<div class="a" style="left:739.5px;top:251.8px;width:10.6px;height:6.2px;background:#d4d4d4;border-radius:3.1px;"></div>
<div class="a" style="left:745px;top:252.8px;width:4.2px;height:4.2px;background:#303030;border-radius:50%;"></div>
<div class="a" style="left:632px;top:264.2px;width:135px;height:0.8px;background:#262626;"></div>
<div class="a" style="left:626.6px;top:143.2px;width:1.7px;height:88.5px;background:#9a9a9a;border-radius:1px;"></div>
<svg class="a" style="left:0;top:0" width="755" height="425" viewBox="0 0 755 425"><g stroke-linejoin="round" stroke-linecap="round"><path d="M281 223 L307 223 L306 230 L303.5 247 L298 271 L313.5 272 L313.2 302 L316.6 319 L316 324.8 L263.6 325 L265.4 303 L267.6 286 L272 270 L279 232 Z" fill="#000"/><path d="M268.4 228.4 L281.4 228.4 L279 246 L275.4 270.4 L260.6 268.2 L263 250 Z" fill="#1d6fa8" stroke="#000" stroke-width="2.6"/><path d="M277.6 231 L280 230.4 L277.4 250 L273.8 268.6 L270.2 268.2 L274.6 248 Z" fill="#2b9bd3"/><path d="M306.4 229 L313 228.4 L314.6 250 L316 271 L297.6 272.2 L303.4 247 Z" fill="#1d6fa8" stroke="#000" stroke-width="2.5"/><path d="M304.6 250 L309.6 262 L314.4 270 L299.4 271 Z" fill="#2b9bd3"/><path d="M297 272.6 L320.6 272.6" stroke="#000" stroke-width="2.4"/><path d="M313 274 L313 279" stroke="#d8d8d8" stroke-width=".8"/><circle cx="287.4" cy="226.6" r=".8" fill="#ddd"/><circle cx="306.6" cy="224.8" r=".8" fill="#ddd"/><path d="M255.6 275 C257.6 271.6 268 271.8 275 273.4 C279.8 275 278.8 285 273 286.2 C266 287.6 256.6 287.6 254.4 283 C253.4 280 254 277.4 255.6 275 Z" fill="#000"/><path d="M259.4 277.6 C261.4 275.6 268 275.8 271.4 276 C275.4 276.8 277 278.6 276.8 283 C274 284.2 268 284.8 263.6 284.4 C262.2 281.4 260.8 279.6 259.4 277.6 Z" fill="#f4f4f4"/><path d="M262.4 277.6 C263.6 279 264.4 281 264 283.6 M272 277.6 C272.4 279 272.6 280.6 272.4 282" stroke="#000" stroke-width="1.2" fill="none"/><path d="M267.4 321.8 C267 313.4 272 313.2 277 313.4 C283 313.6 286.6 316 286.8 321.8 Z" fill="#c9c9cb"/><path d="M267.4 321.8 L267.6 319.6 C274 320.6 281 320.4 286.6 319.4 L286.8 321.8 Z" fill="#8a8a8c"/><path d="M290 320.4 C291 313 297 309.8 303 310 C309 310.2 312.4 313 312.2 320.4 Z" fill="#dededf"/><path d="M290 320.4 L290.4 318.4 C298 319 306 318.6 312.2 317.6 L312.2 320.4 Z" fill="#8f8f91"/><path d="M264 323.6 L316 323.6" stroke="#000" stroke-width="2.6"/><path d="M239.9 185.8 C244 183.5 247.5 181.5 249.5 179 C252.5 175.5 254.5 172.5 256 169.8 C253.5 168.6 251.5 169 249.8 169.8 C250 167 250.4 165 251.4 163.2 C252.6 161 254 159.8 256.2 158.2 C259.5 156 263 154.2 267.4 152.7 C271 151.2 274 150 277.3 149.9 C282 149.8 286.5 153 291.4 153.4 C294.5 153.6 297 152.6 300 152 C305 151 309.5 151 314.1 149.9 C317 149.2 319 148.2 321.2 147.1 C322.8 146.2 324.2 145 325.6 145.3 C327.4 145.8 328.3 147.8 328.9 149.9 C329.6 152.4 329.6 154.6 330.3 156.9 C330.8 158.6 331.4 160 332.5 161.2 C334.8 161.4 337.4 161.8 339.5 163.3 C341.8 164.8 343.8 166 345.1 168.2 C346.6 170.6 346.8 173 348 175.3 C349 177.2 350.2 179 352.2 179.5 C353.8 179.8 355.4 178.8 355.7 177.4 C356 175.8 354.8 174.2 353.4 172.8 C356.2 172.8 358.6 173.6 360.7 175.3 C363 177.2 364.8 179.5 365.6 182.3 C366.2 184.2 366.6 186.2 366.3 188 C365.8 190.6 364.2 192.8 362.1 194.3 C360.4 195.6 358.4 196.6 356.4 197 C354.6 197.2 352.8 197 351.3 196.6 C351 198.2 351 199.6 351.2 201 C351.5 203 352 204.6 352.6 206.6 C353 208 353.4 209.6 354 211 C355 211.8 356.2 211.6 356.6 210.6 C357.2 209.4 357.2 208.4 357 207.2 C357.4 209 357 211 355.3 212.8 C354.2 214.4 353 215.6 351.8 216.8 C350.4 218.2 348.6 219.2 346.8 220.2 L348.5 223.4 L288 222.6 L281.6 222.6 C276 223.2 270 224.6 263.4 225 C262 224 261.2 223 260.4 222.3 C257.6 220.8 255 219 253.3 216.7 C251.4 214.2 250.4 211.2 249.8 208.2 C249.2 204.8 249.6 201.4 250.5 198.3 C251.6 195.4 253.2 193 254.8 190.4 C252 190 249.8 189.6 247.7 188.7 C244.8 187.8 242.4 187 239.9 185.8 Z" fill="#6c6c6e" stroke="#000" stroke-width="2.6"/><path d="M288 198 L287.4 212 L288 222.6 L348.5 223.4 L346.8 220.2 C344 219.8 342 219.8 339.8 219.5 C337 218.8 334.4 218 333.4 216 C332.6 214 333.6 212 334.8 210.3 C336.6 207 339 204 341 200 Z" fill="#fbfbfb"/><path d="M288 206 L292.5 206 L291.8 216 L288 221 Z" fill="#c8c8ca" opacity=".7"/><path d="M341.2 200.4 C339 204 336.6 207 334.8 210.3 C333.6 212 332.6 214 333.4 216 C334.4 218 337 218.8 339.8 219.5 C342 219.8 344 219.8 346.8 220.2" fill="none" stroke="#000" stroke-width="2.5"/><path d="M287.6 222.7 C300 222.8 330 223 348.4 223.5" fill="none" stroke="#000" stroke-width="2.6"/><path d="M263.4 225 C270 224.6 276 223.2 281.6 222.4 C283.6 221.4 284 219.6 284.4 218.1 C285.4 216.4 286.4 214.4 286.5 212.5 C286.5 210.6 286 209 285.1 207.5" fill="none" stroke="#000" stroke-width="2.6"/><path d="M285 202 C281.6 201.6 277 202 275.8 204.6 C274.8 207.4 276 211 279 211.7 C281 212 283 211.8 285 211.7 Z" fill="#f2f2f2" stroke="#000" stroke-width="1.8"/><ellipse cx="298.1" cy="193.6" rx="15" ry="12.6" fill="#000"/><ellipse cx="328.4" cy="196.2" rx="13.6" ry="12.4" fill="#000"/><path d="M293.8 210.6 C295 214 298.4 217 302.4 218.4 C306.4 219.8 311 220 315 219.4 C319 218.8 322.6 217.4 325.4 214.6 C327.4 212.6 328.8 211.4 329.8 210.2" fill="none" stroke="#000" stroke-width="2.5"/><ellipse cx="313.2" cy="208.6" rx="1.2" ry=".9" fill="#222"/><path d="M262.5 168.2 C260.4 166.6 258.4 166 256.2 166.2 C253.6 166.6 251.6 168 249.8 169.8" fill="none" stroke="#000" stroke-width="2.6"/><path d="M332.5 161.2 C331 162.2 329.6 162.6 328.2 163.3 C325.6 164.4 323.4 165.8 321.2 167.5" fill="none" stroke="#000" stroke-width="2.6"/><path d="M339.5 173.2 C338.4 175.6 337.6 178 337 180.9" fill="none" stroke="#000" stroke-width="2.5"/><path d="M351.3 196.6 C350.4 195.4 349.4 194 347.4 192" fill="none" stroke="#000" stroke-width="2.5"/><path d="M351.3 196.6 C351 198.2 351 199.6 351.2 201 C351.5 203 352 204.6 352.6 206.6 C353 208 353.4 209.6 354 211 C355 211.8 356.2 211.6 356.6 210.6 C357.2 209.4 357.2 208.4 357 207.2" fill="none" stroke="#000" stroke-width="2.5"/></g></svg>
</div></div></body></html>
